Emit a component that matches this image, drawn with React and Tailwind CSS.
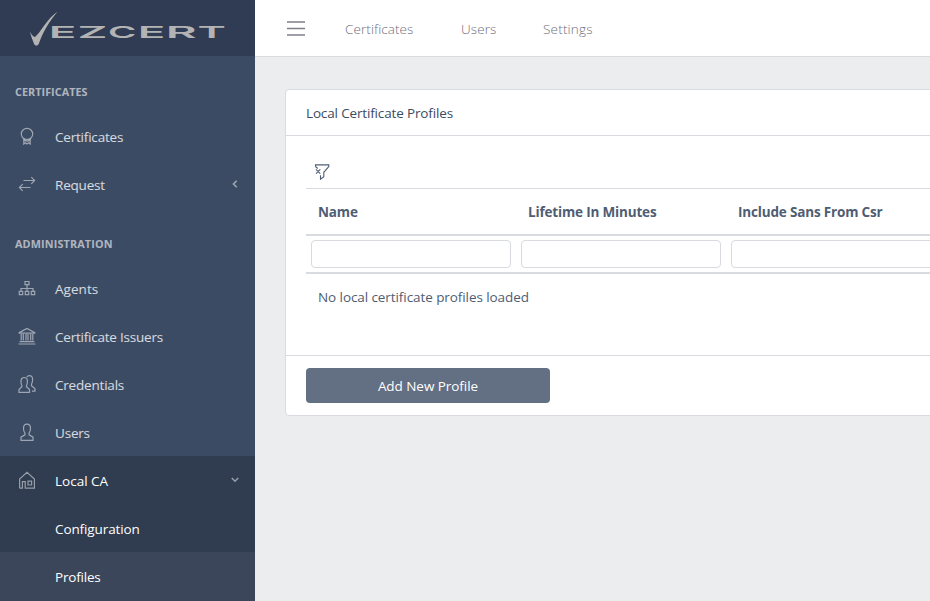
const SANS = "font-['Open_Sans','Noto_Sans',sans-serif]";

function Icon({ children, className = 'size-5' }) {
  return (
    <svg viewBox="0 0 20 20" className={className} fill="none" stroke="currentColor" strokeWidth="1.2">
      {children}
    </svg>
  );
}

const icons = {
  badge: (
    <Icon>
      <circle cx="10" cy="8" r="5.700" />
      <path d="M6.800 13v5l1.600-1.200L10 18l1.600-1.200 1.600 1.200v-5M7 14.400l3 .8 3-.8" />
    </Icon>
  ),
  transfer: (
    <Icon>
      <path d="M6.500 6.500h11M14.300 3.200l3.300 3.300-3.300 3.300M13.500 13.500h-11M5.700 10.200l-3.300 3.300 3.300 3.300" />
    </Icon>
  ),
  tree: (
    <Icon>
      <path d="M8 3.500h4v3.200H8zM10 7v6M4 13v-2.500h12V13M2.300 13.300h3.400v3.400H2.300zM8.300 13.300h3.400v3.400H8.300zM14.300 13.300h3.400v3.400h-3.400z" />
    </Icon>
  ),
  institution: (
    <Icon>
      <path d="M2.200 6.600 10 2.400l7.800 4.200v.6H2.200zM4.200 8v6.500M6.300 8v6.500M9 8v6.500M11 8v6.500M13.700 8v6.500M15.800 8v6.500M2.600 15.600h14.800M1.500 18h17" />
    </Icon>
  ),
  people: (
    <Icon>
      <path d="M2 18.300v-2.700l2.800-2.900v-1.300C4.200 10.700 4 9.700 4 7.200c0-2.300 1.200-3.700 3.200-3.700s3.200 1.400 3.200 3.700c0 2.500-.2 3.500-.9 4.200v1.300l3 2.900v2.700z" />
      <path d="M9.800 3c.6-.9 1.500-1.400 2.600-1.400 2.100 0 3.200 1.400 3.200 3.900 0 2.400-.3 3.600-1.100 4.600v1.600l3.500 3v2.500h-3" />
    </Icon>
  ),
  person: (
    <Icon>
      <path d="M4 18.400v-3.200l3.900-2.400v-1.900C7 10 6.500 8.700 6.500 6.200c0-2.600 1.300-4.100 3.500-4.100s3.500 1.500 3.500 4.100c0 2.500-.5 3.800-1.400 4.700v1.900l3.900 2.400v3.200z" />
    </Icon>
  ),
  house: (
    <Icon>
      <path d="M2.600 18.200V9L10 2.300 17.400 9v9.200H8.200v-6.500H5.400v6.500H2.600M11 11.200h3.600v3.800H11z" />
    </Icon>
  ),
};

function Chevron({ open }) {
  return (
    <svg viewBox="0 0 10 10" className="mr-[15px] mb-px size-[10px] text-white/50" fill="none" stroke="currentColor" strokeWidth="1.6">
      <path d={open ? 'M1.800 3 5 6.200 8.200 3' : 'M6.700 1.800 3.500 5l3.200 3.200'} />
    </svg>
  );
}

function NavItem({ icon, label, chevron, className = 'text-white/80', track = 'tracking-[-0.2px]' }) {
  return (
    <div className={`flex h-12 shrink-0 items-center ${className}`}>
      <span className="mb-px flex w-[55px] pl-[17px] text-white/50">{icon}</span>
      <span className={`mt-[2px] flex-1 text-[13.5px] leading-5 ${track}`}>{label}</span>
      {chevron}
    </div>
  );
}

function NavTitle({ children, track }) {
  return (
    <div className={`h-14 shrink-0 pt-[27px] pl-[15px] text-[10.8px] leading-[18px] font-bold text-white/60 ${track}`}>{children}</div>
  );
}

const logoLetters = [
  { char: 'E', x: 48.8, width: 27.6 },
  { char: 'Z', x: 77.6, width: 30 },
  { char: 'C', x: 108, width: 28.4 },
  { char: 'E', x: 137.8, width: 27.6 },
  { char: 'R', x: 165.8, width: 31 },
  { char: 'T', x: 197.4, width: 28.4 },
];

function Logo() {
  return (
    <svg width="255" height="56" viewBox="0 0 255 56" fill="#b3b3b3">
      <path d="M30 30.800c.6 2.600 2.700 5.800 5 6.200C40 33.500 47.500 18 57.500 11.800 49.500 21 43 32 39 43.200c-.9 2.900-4 3.200-5 .6-1.600-4.300-3.600-8.800-4-13z" />
      {logoLetters.map(({ char, x, width }) => (
        <text key={x} x={x} y="37.8" textLength={width} lengthAdjust="spacingAndGlyphs" fontSize="16.500" fontWeight="600" fontFamily="Inter, sans-serif">
          {char}
        </text>
      ))}
    </svg>
  );
}

function Sidebar() {
  return (
    <aside className="flex h-full w-[255px] shrink-0 flex-col bg-[#3c4b64]">
      <div className="h-14 shrink-0 bg-[#303c54]">
        <Logo />
      </div>
      <NavTitle track="tracking-[0.05px]">CERTIFICATES</NavTitle>
      <NavItem icon={icons.badge} label="Certificates" />
      <NavItem icon={icons.transfer} label="Request" chevron={<Chevron />} />
      <NavTitle track="tracking-[0.15px]">ADMINISTRATION</NavTitle>
      <NavItem icon={icons.tree} label="Agents" track="tracking-[0.05px]" />
      <NavItem icon={icons.institution} label="Certificate Issuers" track="tracking-[-0.22px]" />
      <NavItem icon={icons.people} label="Credentials" />
      <NavItem icon={icons.person} label="Users" />
      <div className="flex flex-1 flex-col bg-[#303c50]">
        <NavItem icon={icons.house} label="Local CA" chevron={<Chevron open />} className="text-white" track="tracking-normal" />
        <NavItem label="Configuration" className="text-white" track="tracking-[-0.1px]" />
        <NavItem label="Profiles" className="flex-1 bg-[#3b465a] pb-px text-white" />
      </div>
    </aside>
  );
}

const columns = ['Name', 'Lifetime In Minutes', 'Include Sans From Csr'];

export default function App() {
  return (
    <div className={`flex h-[601px] w-[930px] overflow-hidden bg-[#ebedef] text-[13.5px] text-[#4f5d73] ${SANS}`}>
      <Sidebar />
      <div className="flex min-w-0 flex-1 flex-col">
        <header className="flex h-[57px] shrink-0 items-center border-b border-[#d8dbe0] bg-white pl-8 text-[#7f7f8a]">
          <svg width="18" height="15" viewBox="0 0 18 15" className="shrink-0" stroke="currentColor" strokeWidth="1.6">
            <path d="M0 1h18M0 7.500h18M0 14h18" />
          </svg>
          <nav className="mt-[2px] flex leading-5 font-light tracking-[0.08px] text-[#6f6f7c]">
            <a className="ml-10 w-[116px]">Certificates</a>
            <a className="w-[82px]">Users</a>
            <a className="tracking-[0.2px]">Settings</a>
          </nav>
        </header>
        <main className="pt-8 pl-[30px]">
          <section className="h-[327px] w-[700px] rounded border border-[#d8dbe0] bg-white">
            <h1 className="h-[46px] border-b border-[#d8dbe0] pt-[13px] pl-5 leading-5 tracking-[-0.15px] text-[#3c4b64]">Local Certificate Profiles</h1>
            <div className="h-[219px] pt-7 pl-5">
              <div className="flex h-[25px] border-b border-[#d8dbe0] pl-2">
                <svg width="16" height="16" viewBox="0 0 16 16" fill="none" stroke="#4f5d73" strokeWidth="1.1">
                  <path d="M1.500 2.500V.9h13.300v1.600L9.800 8.300v4.500l-3.300 2.400v-4M1.500 2.500l2.200 2M2 5.300l4.300 4.300M6.300 5.300 2 9.600" />
                </svg>
              </div>
              <div className="flex h-[47px] items-center border-b-2 border-[#d8dbe0] font-bold tracking-[-0.17px]">
                {columns.map((name) => (
                  <div key={name} className="mt-px w-[210px] shrink-0 pl-3">{name}</div>
                ))}
              </div>
              <div className="flex h-[38px] gap-[10px] border-b-2 border-[#d8dbe0] pt-1 pl-[5px]">
                {columns.map((name) => (
                  <input key={name} aria-label={name} className="h-7 w-[200px] shrink-0 rounded border border-[#d8dbe0] last:w-[210px]" />
                ))}
              </div>
              <p className="pt-[13px] pl-3 leading-5 tracking-[-0.08px]">No local certificate profiles loaded</p>
            </div>
            <footer className="h-[60px] border-t border-[#d8dbe0] pt-3 pl-5">
              <button className="h-[35px] w-[244px] rounded bg-[#636f83] pt-px tracking-[-0.05px] text-white">Add New Profile</button>
            </footer>
          </section>
        </main>
      </div>
    </div>
  );
}
